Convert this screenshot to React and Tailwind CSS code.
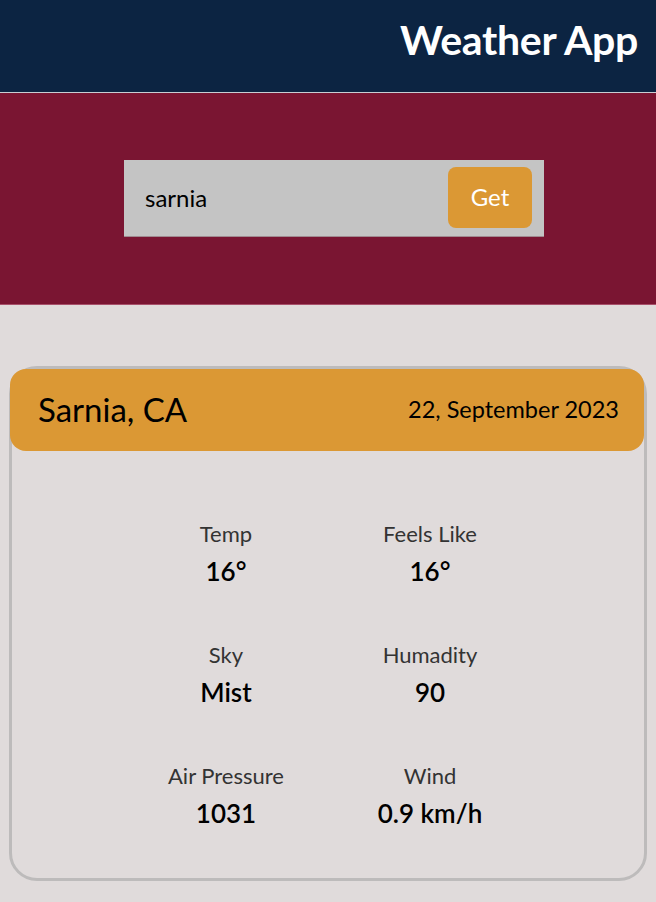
import React from "react";

const font = { fontFamily: "Lato, 'Open Sans', sans-serif" };

function Stat({ label, value }) {
  return (
    <div className="flex flex-col items-center">
      <div className="text-[22px] leading-[28px] text-[#333333]">{label}</div>
      <div className="mt-[7px] text-[26px] leading-[32px] font-semibold text-black">{value}</div>
    </div>
  );
}

export default function App() {
  return (
    <div className="min-h-[902px] bg-[#e0dbdb]" style={font}>
      <header className="h-[93px] bg-[#0c2442] border-b border-[#c9ced3] flex items-center justify-end pr-[18px]">
        <h1 className="text-[41px] font-bold text-white leading-none pb-[14px] tracking-[-0.3px]">Weather App</h1>
      </header>
      <section className="h-[212px] bg-[#7a1532] border-b border-[#a8506a] flex items-center justify-center">
        <div className="ml-[12px] w-[420px] h-[77px] bg-[#c4c4c4] flex items-center justify-between pl-[21px] pr-[12px] border-b border-[#a08a90]">
          <span className="text-[24px] text-black">sarnia</span>
          <button className="w-[84px] h-[61px] mt-[-2px] rounded-[8px] bg-[#db9834] text-white text-[24px]">Get</button>
        </div>
      </section>
      <main className="pt-[61px] px-[9px]">
        <div className="h-[515px] rounded-[28px] border-[3px] border-[#bdbbbb]">
          <div className="ml-[-2px] mr-0 h-[82px] rounded-[16px] bg-[#db9834] flex items-center justify-between pl-[28px] pr-[25px]">
            <span className="text-[33px] text-black">Sarnia, CA</span>
            <span className="text-[23.5px] text-black">22, September 2023</span>
          </div>
          <div className="pt-[69px] grid grid-cols-[204px_204px] justify-center gap-y-[54px]">
            <Stat label="Temp" value="16°" />
            <Stat label="Feels Like" value="16°" />
            <Stat label="Sky" value="Mist" />
            <Stat label="Humadity" value="90" />
            <Stat label="Air Pressure" value="1031" />
            <Stat label="Wind" value="0.9 km/h" />
          </div>
        </div>
      </main>
    </div>
  );
}
